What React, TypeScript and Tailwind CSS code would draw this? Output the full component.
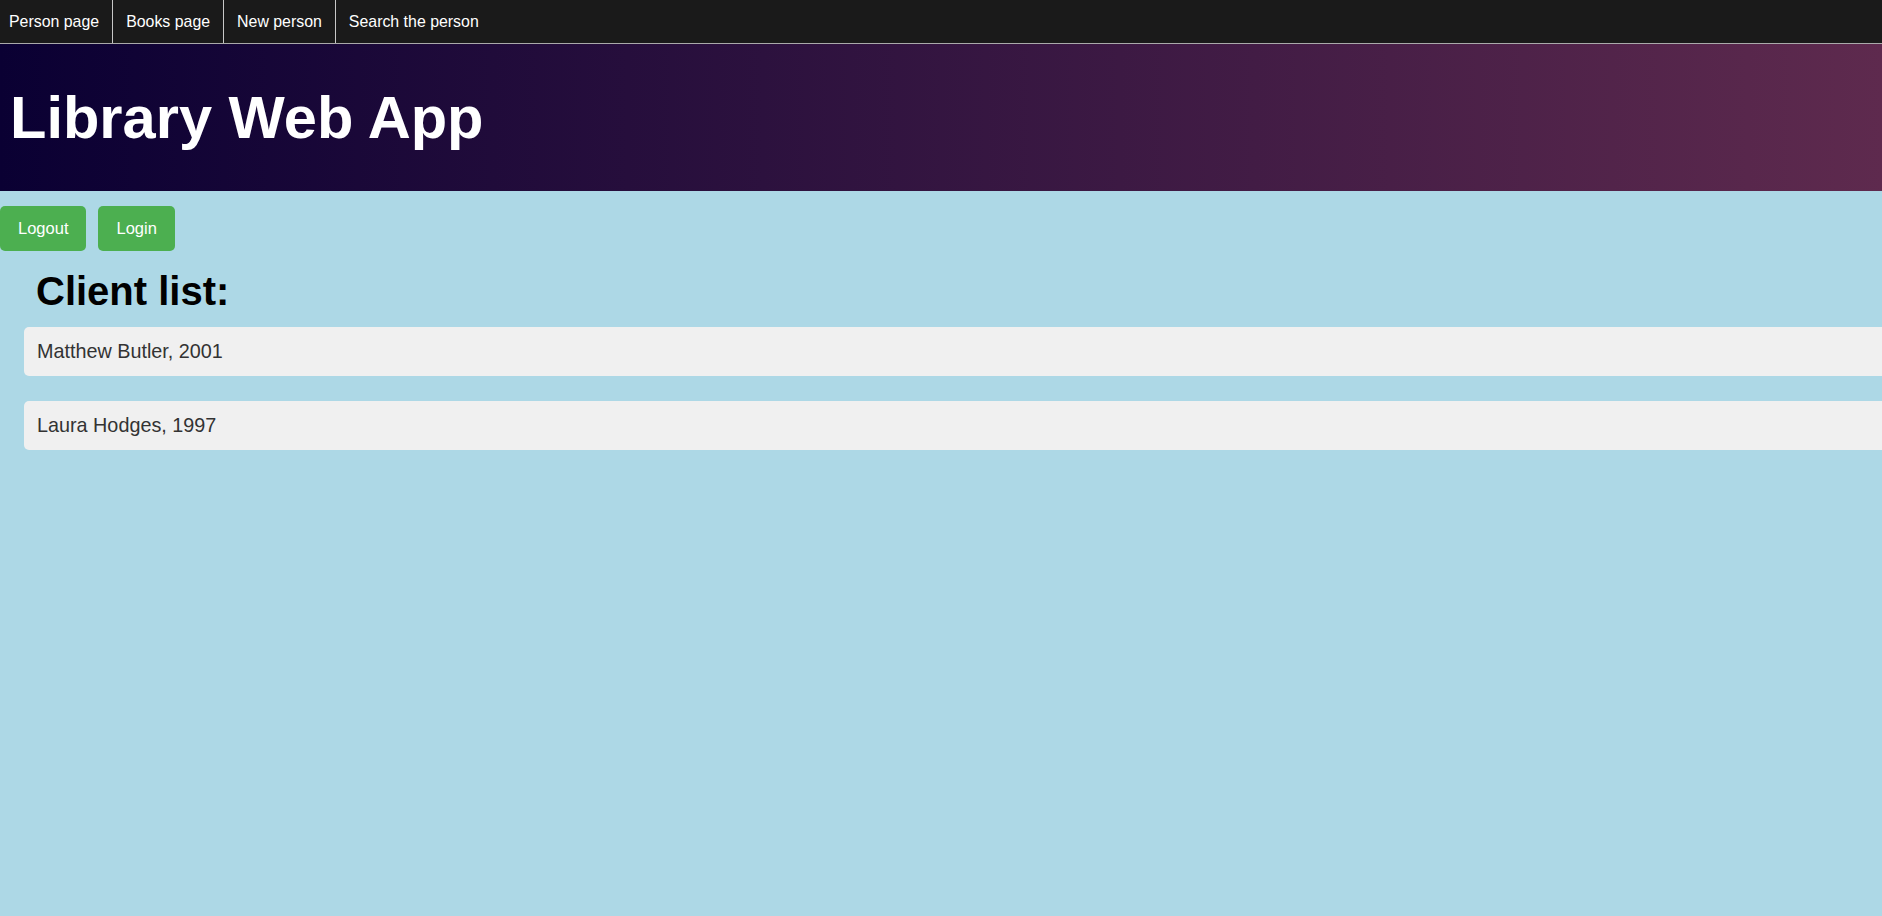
const links = ["Person page", "Books page", "New person", "Search the person"];

const clients = [
  { name: "Matthew Butler", year: 2001 },
  { name: "Laura Hodges", year: 1997 },
];

export default function App() {
  return (
    <div className="min-h-screen overflow-hidden bg-[#add8e6] font-['Liberation_Sans',Arial,sans-serif]">
      <nav className="flex h-[44px] border-b border-[#aaaaaa] bg-[#1a1a1a]">
        {links.map((label, i) => (
          <a
            key={label}
            href="#"
            className={`flex items-center text-[15.9px] text-white ${
              i === 0 ? "pl-[9px] pr-[13px]" : "px-[13px]"
            } ${i < links.length - 1 ? "border-r border-[#c8c8c8]" : ""}`}
          >
            {label}
          </a>
        ))}
      </nav>

      <header className="flex h-[147px] items-center bg-[linear-gradient(to_right,#0a0033,#5e2a4e)] pl-[10px]">
        <h1 className="text-[59.6px] font-bold leading-none text-white">Library Web App</h1>
      </header>

      <div className="mt-[15px] flex gap-[12px]">
        <button className="h-[45px] rounded-[5px] bg-[#4caf50] px-[18px] text-[16.5px] text-white">
          Logout
        </button>
        <button className="h-[45px] rounded-[5px] bg-[#4caf50] px-[18px] text-[16.5px] text-white">
          Login
        </button>
      </div>

      <main className="pl-[24px]">
        <h2 className="mt-[18px] pl-[12px] text-[40px] font-bold leading-[45px] text-black">
          Client list:
        </h2>
        <ul className="mt-[13px] mr-[-20px] flex flex-col gap-[25px]">
          {clients.map((c) => (
            <li
              key={c.name}
              className="flex h-[49px] items-center rounded-[5px] bg-[#f0f0f0] pl-[13px] text-[19.8px] text-[#333333]"
            >
              {c.name}, {c.year}
            </li>
          ))}
        </ul>
      </main>
    </div>
  );
}
